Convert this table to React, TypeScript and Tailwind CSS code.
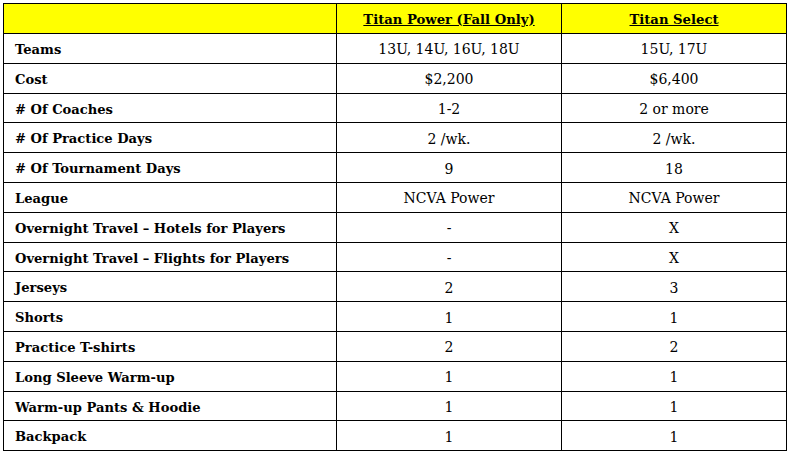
const rows: [string, string, string][] = [
  ['Teams', '13U, 14U, 16U, 18U', '15U, 17U'],
  ['Cost', '$2,200', '$6,400'],
  ['# Of Coaches', '1-2', '2 or more'],
  ['# Of Practice Days', '2 /wk.', '2 /wk.'],
  ['# Of Tournament Days', '9', '18'],
  ['League', 'NCVA Power', 'NCVA Power'],
  ['Overnight Travel – Hotels for Players', '-', 'X'],
  ['Overnight Travel – Flights for Players', '-', 'X'],
  ['Jerseys', '2', '3'],
  ['Shorts', '1', '1'],
  ['Practice T-shirts', '2', '2'],
  ['Long Sleeve Warm-up', '1', '1'],
  ['Warm-up Pants & Hoodie', '1', '1'],
  ['Backpack', '1', '1'],
]

export default function App() {
  return (
    <div className="w-[789px] h-[453px] bg-white pt-[3px] pl-[3px] font-['DejaVu_Serif',serif] text-black">
      <table className="border-collapse table-fixed w-[783px] border border-black">
        <colgroup>
          <col className="w-[333px]" />
          <col className="w-[225px]" />
          <col className="w-[225px]" />
        </colgroup>
        <thead>
          <tr className="h-[30px] bg-[#ffff00]">
            <th className="border border-black" />
            <th className="border border-black pt-[2px] text-[13.2px] font-bold underline">Titan Power (Fall Only)</th>
            <th className="border border-black pt-[2px] text-[13.2px] font-bold underline">Titan Select</th>
          </tr>
        </thead>
        <tbody>
          {rows.map(([label, power, select]) => (
            <tr key={label} className="h-[29.8px]">
              <td className="border border-black pl-[11px] pt-[3px] text-[13.1px] font-bold">{label}</td>
              <td className="border border-black pt-[3px] text-center text-[14px]">{power}</td>
              <td className="border border-black pt-[3px] text-center text-[14px]">{select}</td>
            </tr>
          ))}
        </tbody>
      </table>
    </div>
  )
}
